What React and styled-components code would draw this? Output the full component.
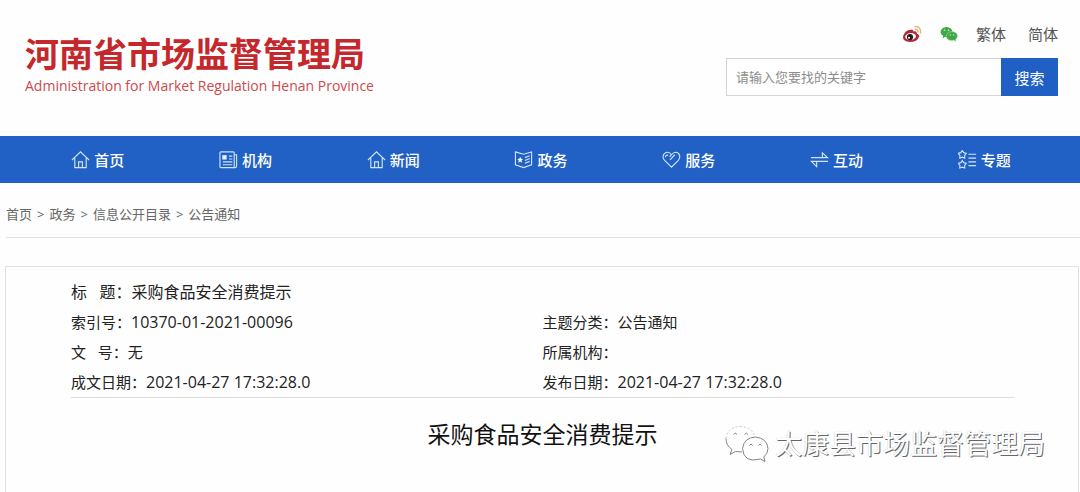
import React from 'react'
import styled, { createGlobalStyle } from 'styled-components'

const navItems = [
  { label: '首页', icon: 'home' },
  { label: '机构', icon: 'paper' },
  { label: '新闻', icon: 'home' },
  { label: '政务', icon: 'book' },
  { label: '服务', icon: 'heart' },
  { label: '互动', icon: 'swap' },
  { label: '专题', icon: 'stars' },
]

const crumbs = ['首页', '政务', '信息公开目录', '公告通知']

const details = [
  { label: '标   题：', value: '采购食品安全消费提示', wide: true },
  { label: '索引号：', value: '10370-01-2021-00096', code: true },
  { label: '主题分类：', value: '公告通知' },
  { label: '文   号：', value: '无' },
  { label: '所属机构：', value: '' },
  { label: '成文日期：', value: '2021-04-27 17:32:28.0', code: true },
  { label: '发布日期：', value: '2021-04-27 17:32:28.0', code: true },
]

const star = 'M4.5 0.5 L6 2.8 L8.7 3.5 L7 5.7 L7.1 8.5 L4.5 7.6 L1.9 8.5 L2 5.7 L0.3 3.5 L3 2.8 Z'

const icons = {
  home: (
    <>
      <path d="M1 10.5 L10 2 L19 10.5" />
      <path d="M4 8.5 V18.5 H16 V8.5" />
      <path d="M8 18.5 V12.5 H12 V18.5" />
    </>
  ),
  paper: (
    <>
      <rect x="1" y="2" width="15" height="16.5" rx="1" />
      <path d="M16 5 H18.5 V17 Q18.5 18.5 17 18.5 H15" />
      <path d="M10.5 6.5 H14 M10.5 9.5 H14 M4 12.5 H14 M4 15.5 H14" />
      <rect x="4" y="6" width="3.5" height="3.5" fill="#ffffff" />
    </>
  ),
  book: (
    <>
      <path d="M1.5 2 L10 4.5 L18.5 2 V15.5 L10 18.5 L1.5 15.5 Z" />
      <path d="M11.5 8 L16.5 6 M11.5 11 L16.5 9 M11.5 14 L16.5 12" />
      <path d="M6.5 7 L7.4 9.3 L9.7 9.4 L7.9 10.9 L8.6 13.3 L6.5 12 L4.4 13.3 L5.1 10.9 L3.3 9.4 L5.6 9.3 Z" fill="#ffffff" stroke="none" />
    </>
  ),
  heart: (
    <path d="M3.5 7.5 Q4 5.2 6.5 5.5 M8.5 10.5 L13.5 5 M10 5 Q7.5 1.5 4.3 2.7 Q0.8 4.2 1.2 8 Q1.5 9.8 3 11.2 L10 18 L17 11.2 Q19.3 8.6 18.6 5.8 Q17.6 2.6 14.5 2.4 Q12 2.4 10 5 L8 7.2" />
  ),
  swap: (
    <path d="M1 8 H18.5 L13 3 V8 M19 12 H1.5 L7 17.5 V12" />
  ),
  stars: (
    <>
      <path d={star} />
      <path d={star} transform="translate(0 10.5)" />
      <path d="M11 4.5 H19 M11 8.5 H19 M11 12.5 H19 M11 16.5 H19" />
    </>
  ),
}

const WeiboLogo = () => (
  <svg width="20" height="18" viewBox="0 0 20 18" aria-hidden="true">
    <path d="M8 5 Q11 3.5 11.5 6.5 Q15 5.5 14.8 8.5 Q18 9.5 16.8 12.5 Q14.5 17 8 17 Q1 16.5 1 12.2 Q1.5 8 5.5 5.5 Q7 4.7 8 5 Z" fill="#b02a34" />
    <ellipse cx="8.6" cy="11.5" rx="5.4" ry="3.4" transform="rotate(-6 8.6 11.5)" fill="#ffffff" />
    <circle cx="8" cy="12" r="3.1" fill="#2a1416" />
    <circle cx="7" cy="12.8" r="1" fill="#ffffff" />
    <path d="M13 1.5 Q19 1 18.5 8 M13.3 4.2 Q16.3 4 16 7" fill="none" stroke="#e8b070" strokeWidth="1.4" strokeLinecap="round" />
  </svg>
)

const WechatLogo = () => (
  <svg width="18" height="16" viewBox="0 0 18 16" aria-hidden="true">
    <path d="M2.5 12.5 L3.2 10 Q0.5 8.5 0.5 6 Q1 1.3 6.5 1 Q12 1.3 12.5 6 Q12 10.8 6.5 11 L4.8 10.9 Z" fill="#3fa845" />
    <path d="M16 15.3 L13.8 14.3 Q7 15.5 6.2 10.2 Q6.8 5.8 12 5.6 Q17.2 6 17.5 10.1 Q17.3 12 15.6 13.3 Z" fill="#3fa845" stroke="#b5deb7" strokeWidth="0.6" />
    <g fill="#d6f0d7">
      <circle cx="4.5" cy="4.3" r="0.8" />
      <circle cx="8.5" cy="4.3" r="0.8" />
      <circle cx="10.2" cy="8.9" r="0.7" />
      <circle cx="13.6" cy="8.9" r="0.7" />
    </g>
  </svg>
)

const WatermarkLogo = () => (
  <svg width="44" height="38" viewBox="0 0 44 38" fill="#ffffff" stroke="#777777" strokeWidth="0.9" aria-hidden="true">
    <path d="M5 29.5 L7 24.5 Q1 20.5 1 13.5 Q2.5 2 15 1.5 Q28 2 29.5 12.5 Q28 26 14 27 L10.5 26.5 Z" stroke="none" />
    <path d="M1 13.5 Q2.5 2 15 1.5 Q28 2 29.5 12.5" fill="none" stroke="#bbbbbb" strokeDasharray="2 2" />
    <path d="M1 13.5 Q1 20.5 7 24.5 L5 29.5 L10.5 26.5 L17 27" fill="none" />
    <path d="M40 36.5 L35.5 34 Q18.5 38.5 17.5 23.5 Q19 12.5 30.5 12 Q42 13 43 23.5 Q43 28.5 38.8 32 Z" />
    <path d="M8.5 9.5 Q10.2 6.5 12 9.5 M19.5 9.5 Q21.3 6.5 23 9.5 M24.5 20.5 Q26 17.5 27.5 20.5 M33.5 20.5 Q35 17.5 36.5 20.5" fill="none" />
  </svg>
)

const App = () => {
  return (
    <Page>
      <GlobalStyle />
      <Header>
        <Brand>
          <BrandName>河南省市场监督管理局</BrandName>
          <BrandSub>Administration for Market Regulation Henan Province</BrandSub>
        </Brand>
        <Tools>
          <TopLinks>
            <TopLink href="#weibo" aria-label="微博"><WeiboLogo /></TopLink>
            <TopLink href="#wechat" aria-label="微信"><WechatLogo /></TopLink>
            <TopLink href="#hant">繁体</TopLink>
            <TopLink href="#hans" $last>简体</TopLink>
          </TopLinks>
          <SearchForm onSubmit={(e) => e.preventDefault()}>
            <SearchInput type="text" aria-label="关键字" placeholder="请输入您要找的关键字" />
            <SearchButton type="submit">搜索</SearchButton>
          </SearchForm>
        </Tools>
      </Header>

      <Nav>
        {navItems.map((item) => (
          <NavLink key={item.label} href={'#' + item.label}>
            <NavIcon viewBox="0 0 20 20" aria-hidden="true">{icons[item.icon]}</NavIcon>
            {item.label}
          </NavLink>
        ))}
      </Nav>

      <Breadcrumb>
        {crumbs.map((crumb, i) => (
          <React.Fragment key={crumb}>
            {i > 0 && <span>&gt;</span>}
            <CrumbLink href={'#' + crumb}>{crumb}</CrumbLink>
          </React.Fragment>
        ))}
      </Breadcrumb>

      <Article>
        <Details>
          {details.map((item) => (
            <Detail key={item.label} $wide={item.wide}>
              <dt>{item.label}</dt>
              <DetailValue $code={item.code}>{item.value}</DetailValue>
            </Detail>
          ))}
        </Details>
        <ArticleTitle>采购食品安全消费提示</ArticleTitle>
      </Article>

      <Watermark>
        <WatermarkLogo />
        太康县市场监督管理局
      </Watermark>
    </Page>
  )
}

export default App

const GlobalStyle = createGlobalStyle`
  * {
    box-sizing: border-box;
  }
  body {
    margin: 0;
    background: #fefefe;
    color: #333333;
    font-family: "Open Sans", "Noto Sans CJK SC", sans-serif;
  }
  a {
    color: inherit;
    text-decoration: none;
  }
`

const Page = styled.div`
  position: relative;
  display: flex;
  flex-direction: column;
  min-height: 100vh;
`

const Header = styled.header`
  display: flex;
  justify-content: space-between;
  padding: 22px 22px 38px 25px;
`

const Brand = styled.div`
  padding-top: 12px;
`

const BrandName = styled.h1`
  margin: 0;
  color: #c5282c;
  font-size: 34px;
  font-weight: bold;
  line-height: 40px;
`

const BrandSub = styled.p`
  margin: 0;
  color: #cc4a4e;
  font-size: 14px;
  font-weight: 400;
  line-height: 24px;
`

const Tools = styled.div`
  display: flex;
  flex-direction: column;
  align-items: flex-end;
  gap: 12px;
`

const TopLinks = styled.div`
  display: flex;
  align-items: center;
  gap: 18px;
  height: 24px;
`

const TopLink = styled.a`
  display: flex;
  color: #555555;
  font-size: 15px;
  line-height: 24px;
  margin-left: ${(props) => (props.$last ? 4 : 0)}px;
`

const SearchForm = styled.form`
  display: flex;
  width: 332px;
  height: 38px;
`

const SearchInput = styled.input`
  flex: 1;
  min-width: 0;
  padding: 0 9px;
  border: 1px solid #d4d4d4;
  border-right: none;
  border-radius: 0;
  background: #ffffff;
  color: #333333;
  font-family: inherit;
  font-size: 13px;
  outline: none;
  &::placeholder {
    color: #8c8c8c;
  }
`

const SearchButton = styled.button`
  width: 57px;
  padding: 0;
  border: none;
  background: #2060c4;
  color: #ffffff;
  font-family: inherit;
  font-size: 15px;
`

const Nav = styled.nav`
  display: grid;
  grid-template-columns: repeat(7, 1fr);
  height: 47px;
  padding: 0 22px 0 24px;
  background: #2160c4;
`

const NavLink = styled.a`
  display: flex;
  align-items: center;
  justify-content: center;
  gap: 4px;
  color: #ffffff;
  font-size: 15px;
  font-weight: 500;
`

const NavIcon = styled.svg`
  width: 19px;
  height: 19px;
  fill: none;
  stroke: #cfe4ff;
  stroke-width: 1.2;
`

const Breadcrumb = styled.nav`
  display: flex;
  gap: 5px;
  margin-left: 6px;
  padding: 20px 0 12px;
  border-bottom: 1px solid #e2e2e2;
  color: #666666;
  font-size: 13px;
  line-height: 22px;
`

const CrumbLink = styled.a`
  color: #666666;
`

const Article = styled.main`
  flex: 1;
  margin: 28px 1px 0 5px;
  padding: 10px 64px 0 65px;
  border: 1px solid #e2e2e2;
  border-bottom: none;
`

const Details = styled.dl`
  display: grid;
  grid-template-columns: 1fr 1fr;
  margin: 0;
  border-bottom: 1px solid #dddddd;
`

const Detail = styled.div`
  display: flex;
  grid-column: ${(props) => (props.$wide ? '1 / -1' : 'auto')};
  color: #222222;
  font-size: ${(props) => (props.$wide ? 16 : 15)}px;
  line-height: 30px;
  white-space: pre;
`

const DetailValue = styled.dd`
  margin: 0;
  font-size: ${(props) => (props.$code ? '16px' : 'inherit')};
`

const ArticleTitle = styled.h2`
  margin: 20px 0 0;
  color: #111111;
  font-size: 23px;
  font-weight: normal;
  line-height: 32px;
  text-align: center;
`

const Watermark = styled.div`
  position: absolute;
  right: 35px;
  bottom: 29px;
  display: flex;
  align-items: center;
  gap: 6px;
  color: #ffffff;
  font-size: 27px;
  line-height: 38px;
  text-shadow: 1px 1px 0 #666666, 0 0 1px #bbbbbb;
`
